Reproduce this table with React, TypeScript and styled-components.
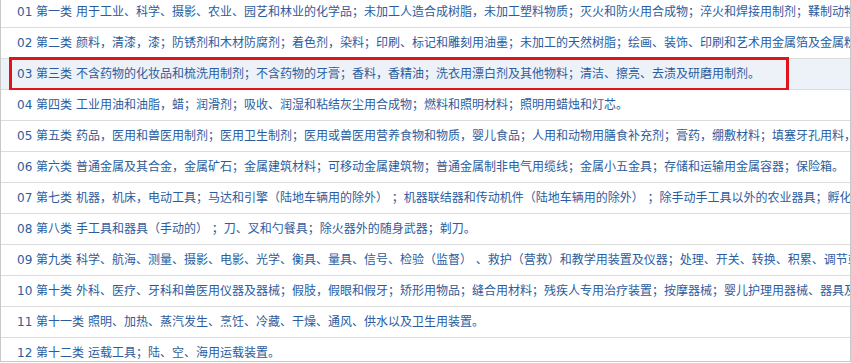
import styled, { createGlobalStyle } from "styled-components";

const GlobalStyle = createGlobalStyle`
  html, body {
    margin: 0;
    padding: 0;
    background: #fff;
    overflow: hidden;
  }
`;

const Panel = styled.div`
  box-sizing: border-box;
  width: 851px;
  height: 366px;
  margin-top: -4px;
  border: 1px solid #c8c8c8;
  overflow: hidden;
  background: #fff;
`;

const List = styled.ul`
  list-style: none;
  margin: 0;
  padding: 0;
`;

const Row = styled.li<{ $active?: boolean }>`
  position: relative;
  height: 30px;
  line-height: 30px;
  padding-left: 16px;
  border-bottom: 1px solid #dcdcdc;
  background: ${(p) => (p.$active ? "#edf2f8" : "#fff")};
  color: #2b5c9e;
  font-family: "DejaVu Sans", "Noto Sans CJK SC", sans-serif;
  font-size: 12px;
  white-space: nowrap;
  overflow: visible;

  &::after {
    content: "";
    display: ${(p) => (p.$active ? "block" : "none")};
    position: absolute;
    left: 8px;
    top: -2px;
    bottom: -2px;
    width: 780px;
    box-sizing: border-box;
    border: 3px solid #e0141c;
  }
`;

const Code = styled.span``;

const Name = styled.span``;

const Desc = styled.span``;

const classes = [
  ["01", "第一类", "用于工业、科学、摄影、农业、园艺和林业的化学品；未加工人造合成树脂，未加工塑料物质；灭火和防火用合成物；淬火和焊接用制剂；鞣制动物皮革用物质；工业用粘合剂"],
  ["02", "第二类", "颜料，清漆，漆；防锈剂和木材防腐剂；着色剂，染料；印刷、标记和雕刻用油墨；未加工的天然树脂；绘画、装饰、印刷和艺术用金属箔及金属粉"],
  ["03", "第三类", "不含药物的化妆品和梳洗用制剂；不含药物的牙膏；香料，香精油；洗衣用漂白剂及其他物料；清洁、擦亮、去渍及研磨用制剂。"],
  ["04", "第四类", "工业用油和油脂，蜡；润滑剂；吸收、润湿和粘结灰尘用合成物；燃料和照明材料；照明用蜡烛和灯芯。"],
  ["05", "第五类", "药品，医用和兽医用制剂；医用卫生制剂；医用或兽医用营养食物和物质，婴儿食品；人用和动物用膳食补充剂；膏药，绷敷材料；填塞牙孔用料，牙科用蜡"],
  ["06", "第六类", "普通金属及其合金，金属矿石；金属建筑材料；可移动金属建筑物；普通金属制非电气用缆线；金属小五金具；存储和运输用金属容器；保险箱。"],
  ["07", "第七类", "机器，机床，电动工具；马达和引擎（陆地车辆用的除外） ；机器联结器和传动机件（陆地车辆用的除外） ；除手动手工具以外的农业器具；孵化器"],
  ["08", "第八类", "手工具和器具（手动的） ；刀、叉和勺餐具；除火器外的随身武器；剃刀。"],
  ["09", "第九类", "科学、航海、测量、摄影、电影、光学、衡具、量具、信号、检验（监督） 、救护（营救）和教学用装置及仪器；处理、开关、转换、积累、调节或控制电的装置和仪器"],
  ["10", "第十类", "外科、医疗、牙科和兽医用仪器及器械；假肢，假眼和假牙；矫形用物品；缝合用材料；残疾人专用治疗装置；按摩器械；婴儿护理用器械、器具及用品"],
  ["11", "第十一类", "照明、加热、蒸汽发生、烹饪、冷藏、干燥、通风、供水以及卫生用装置。"],
  ["12", "第十二类", "运载工具；陆、空、海用运载装置。"],
];

const App = () => {
  return (
    <>
      <GlobalStyle />
      <Panel>
        <List>
          {classes.map(([code, name, desc]) => (
            <Row key={code} $active={code === "03"}>
              <Code>{code}</Code> <Name>{name}</Name> <Desc>{desc}</Desc>
            </Row>
          ))}
        </List>
      </Panel>
    </>
  );
};

export default App;
